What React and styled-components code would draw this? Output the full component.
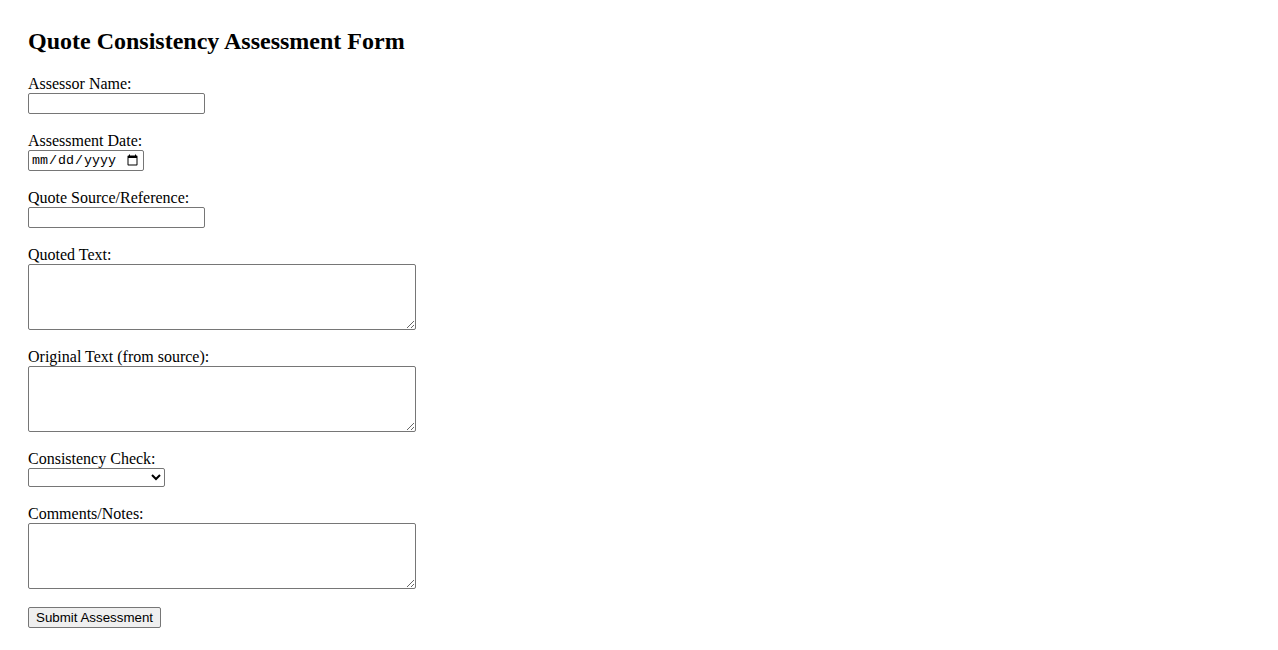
import React from "react";
import styled, { createGlobalStyle } from "styled-components";

const GlobalStyle = createGlobalStyle`
  body {
    margin: 0;
    background: #fff;
    color: #000;
    font-family: "Liberation Serif", "Times New Roman", serif;
    font-size: 16px;
  }
`;

const Page = styled.div`
  padding: 28px;
`;

const Title = styled.h2`
  margin: 0 0 20px;
  font-size: 24px;
  font-weight: bold;
`;

const Field = styled.div`
  margin-bottom: 18px;
`;

const Label = styled.label`
  display: block;
`;

const controlBase = `
  box-sizing: border-box;
  border: 1px solid #767676;
  border-radius: 2px;
  background: #fff;
  font-family: "Liberation Sans", Arial, sans-serif;
  font-size: 13.33px;
  margin: 0;
`;

const TextInput = styled.input`
  ${controlBase}
  display: block;
  width: 177px;
  height: 21px;
  padding: 1px 2px;
`;

const DateInput = styled.input`
  ${controlBase}
  display: block;
  width: 116px;
  height: 21px;
  padding: 1px 2px;
  font-family: "Liberation Mono", "DejaVu Sans Mono", monospace;
`;

const TextArea = styled.textarea`
  ${controlBase}
  display: block;
  width: 388px;
  height: 66px;
  padding: 2px;
`;

const Select = styled.select`
  ${controlBase}
  display: block;
  width: 137px;
  height: 19px;
`;

const SubmitButton = styled.button`
  box-sizing: border-box;
  height: 21px;
  margin: 0;
  padding: 1px 7px;
  border: 1px solid #767676;
  border-radius: 2px;
  background: #efefef;
  color: #000;
  font-family: "Liberation Sans", Arial, sans-serif;
  font-size: 13.33px;
`;

export default function App() {
  return (
    <Page>
      <GlobalStyle />
      <Title>Quote Consistency Assessment Form</Title>
      <form onSubmit={(e) => e.preventDefault()}>
        <Field>
          <Label htmlFor="assessor">Assessor Name:</Label>
          <TextInput id="assessor" type="text" />
        </Field>
        <Field>
          <Label htmlFor="date">Assessment Date:</Label>
          <DateInput id="date" type="date" />
        </Field>
        <Field>
          <Label htmlFor="source">Quote Source/Reference:</Label>
          <TextInput id="source" type="text" />
        </Field>
        <Field>
          <Label htmlFor="quoted">Quoted Text:</Label>
          <TextArea id="quoted" />
        </Field>
        <Field>
          <Label htmlFor="original">Original Text (from source):</Label>
          <TextArea id="original" />
        </Field>
        <Field>
          <Label htmlFor="check">Consistency Check:</Label>
          <Select id="check" defaultValue="">
            <option value=""></option>
            <option value="consistent">Consistent</option>
            <option value="minor">Minor discrepancies</option>
            <option value="major">Major discrepancies</option>
          </Select>
        </Field>
        <Field>
          <Label htmlFor="notes">Comments/Notes:</Label>
          <TextArea id="notes" />
        </Field>
        <SubmitButton type="submit">Submit Assessment</SubmitButton>
      </form>
    </Page>
  );
}
